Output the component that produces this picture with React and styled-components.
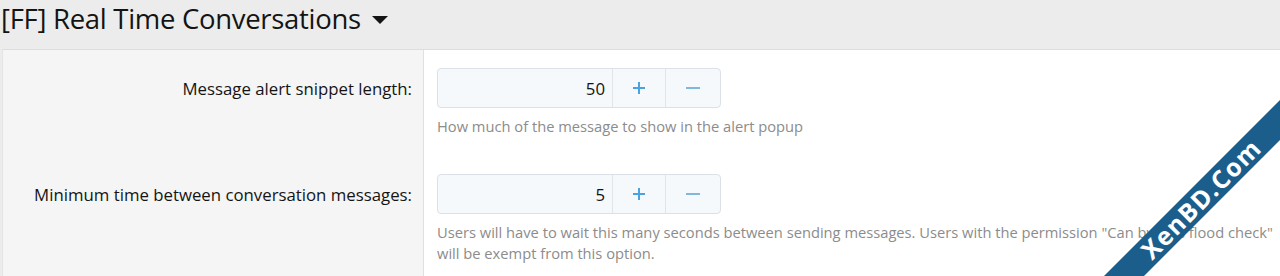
import React from "react";
import styled, { createGlobalStyle } from "styled-components";

const Global = createGlobalStyle`
  body {
    margin: 0;
    background: #ececec;
    font-family: "Open Sans", "Noto Sans", sans-serif;
    color: #141414;
  }
`;

const Page = styled.div`
  position: relative;
  height: 276px;
  overflow: hidden;
`;

const Header = styled.div`
  display: flex;
  align-items: center;
  height: 49px;
  padding-left: 1px;
`;

const Title = styled.h1`
  margin: 0;
  font-size: 27.5px;
  font-weight: 400;
  letter-spacing: -0.3px;
  line-height: 36px;
  margin-top: -12px;
  display: flex;
  align-items: center;
`;

const Caret = styled.span`
  display: inline-block;
  margin-left: 11px;
  margin-top: 2px;
  width: 0;
  height: 0;
  border-left: 8px solid transparent;
  border-right: 8px solid transparent;
  border-top: 8px solid #141414;
`;

const Panel = styled.div`
  margin-left: 2px;
  border-top: 1px solid #dddddd;
  border-left: 1px solid #e4e4e4;
  background: #fff;
  height: 227px;
`;

const Row = styled.div`
  display: flex;
`;

const Label = styled.div`
  width: 409px;
  flex-shrink: 0;
  background: #f5f5f5;
  border-right: 1px solid #e0e0e0;
  padding: ${p => (p.first ? "29px" : "28px")} 11px 0 0;
  text-align: right;
  font-size: 16.8px;
  line-height: 20px;
  height: ${p => p.h}px;
  box-sizing: content-box;
`;

const Field = styled.div`
  padding: ${p => (p.first ? "18px" : "17px")} 0 0 13px;
  flex: 1;
`;

const Spinner = styled.div`
  display: flex;
  width: 284px;
  height: 40px;
  box-sizing: border-box;
  border: 1px solid #dbe1e6;
  border-radius: 4px;
  background: #f6f9fb;
  overflow: hidden;
`;

const NumberBox = styled.div`
  flex: 1;
  display: flex;
  align-items: center;
  justify-content: flex-end;
  padding-right: 7px;
  font-size: 16.8px;
`;

const StepButton = styled.div`
  width: ${p => p.w}px;
  display: flex;
  align-items: center;
  justify-content: center;
  border-left: 1px solid #e1e5e8;
`;

const Hint = styled.div`
  margin-top: 8px;
  font-size: 14.7px;
  line-height: 21px;
  color: #8c8c8c;
  white-space: nowrap;
`;

const Watermark = styled.svg`
  position: absolute;
  right: 0;
  bottom: 0;
`;

const Plus = ({ color }) => (
  <svg width="14" height="14" viewBox="0 0 14 14">
    <path d="M7 1v12M1 7h12" stroke={color} strokeWidth="2" />
  </svg>
);

const Minus = ({ color }) => (
  <svg width="16" height="14" viewBox="0 0 16 14">
    <path d="M1 7h14" stroke={color} strokeWidth="2" />
  </svg>
);

const rows = [
  {
    label: "Message alert snippet length:",
    value: 50,
    hint: ["How much of the message to show in the alert popup"],
    h: 78,
  },
  {
    label: "Minimum time between conversation messages:",
    value: 5,
    hint: [
      'Users will have to wait this many seconds between sending messages. Users with the permission "Can bypass flood check"',
      "will be exempt from this option.",
    ],
    h: 100,
  },
];

export default function App() {
  return (
    <Page>
      <Global />
      <Header>
        <Title>
          [FF] Real Time Conversations
          <Caret />
        </Title>
      </Header>
      <Panel>
        {rows.map((r, i) => (
          <Row key={r.label}>
            <Label first={i === 0} h={r.h}>
              {r.label}
            </Label>
            <Field first={i === 0}>
              <Spinner>
                <NumberBox>{r.value}</NumberBox>
                <StepButton w={52}>
                  <Plus color="#4aa3df" />
                </StepButton>
                <StepButton w={54}>
                  <Minus color="#7fb8dc" />
                </StepButton>
              </Spinner>
              <Hint>
                {r.hint.map(t => (
                  <div key={t}>{t}</div>
                ))}
              </Hint>
            </Field>
          </Row>
        ))}
      </Panel>
      <Watermark width="180" height="176" viewBox="0 0 180 176">
        <polygon points="180,0 180,40 44,176 4,176" fill="#1b5e8c" />
        <text
          x="0"
          y="0"
          transform="translate(52,161) rotate(-45)"
          fill="#fff"
          fontFamily="Open Sans, sans-serif"
          fontWeight="700"
          fontSize="25"
          textLength="156"
          lengthAdjust="spacing"
        >
          XenBD.Com
        </text>
      </Watermark>
    </Page>
  );
}
